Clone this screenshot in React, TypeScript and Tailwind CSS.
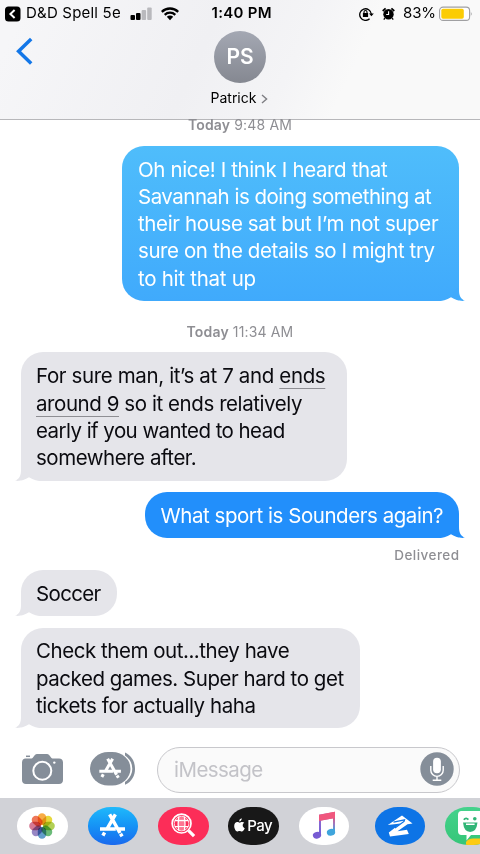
import React from 'react';

type Line = { text: React.ReactNode; track: string };

function Tail({ side, color }: { side: 'left' | 'right'; color: string }) {
  return (
    <svg
      className={side === 'right' ? 'absolute -right-[6px] -bottom-px' : 'absolute -left-[6px] -bottom-px -scale-x-100'}
      width="32"
      height="24"
      viewBox="0 0 32 24"
    >
      <path d="M24 10H26V12C26 17.5 27.5 20.8 32 22.8C27 23.4 22.5 22 18 19.2Z" fill={color} />
      <path d="M4 23.2C9.5 23 13.5 21.8 18 19.2C22.5 22 27 23.4 32 22.8V24H4Z" fill="#fff" />
    </svg>
  );
}

function Bubble({ side, box, fill, tail, lines }: { side: 'left' | 'right'; box: string; fill: string; tail: string; lines: Line[] }) {
  return (
    <div className={`relative flex flex-col justify-center rounded-[22px] pt-px text-[20.5px] leading-[27.25px] ${side === 'right' ? 'ml-auto mr-[21px] rounded-br-none pl-[16px] text-white' : 'ml-[20.5px] rounded-bl-none pl-[15.5px] text-[#0b0b10]'} ${box} ${fill}`}>
      <Tail side={side} color={tail} />
      {lines.map((l, i) => (
        <div key={i} className={`relative whitespace-nowrap ${l.track}`}>{l.text}</div>
      ))}
    </div>
  );
}

function StoreMark({ className }: { className: string }) {
  return (
    <svg className={className} viewBox="0 0 28 26" fill="none" stroke="#fff" strokeWidth="3.6" strokeLinecap="butt">
      <path d="M11 1.5L21.8 20.8M17 1.5L7.8 17.5M5.8 20.3L4 23.5M1 16.6H17.4M20.4 16.6H27M22.3 21.6L24 24.4" />
    </svg>
  );
}

function StatusBar() {
  return (
    <div className="flex h-[27px] items-center pl-[5px] pr-[7px] text-black">
      <div className="flex w-[206.5px] items-center">
        <svg width="16" height="16" viewBox="0 0 16 16">
          <rect x="0" y="0.5" width="15.5" height="15" rx="3.5" />
          <path d="M9.6 4L5.4 8L9.6 12" fill="none" stroke="#fff" strokeWidth="2" />
        </svg>
        <span className="ml-[5px] w-[95px] whitespace-nowrap text-[15px] tracking-[0.2px]">D&amp;D Spell 5e</span>
        <svg className="ml-[9px]" width="23" height="14" viewBox="0 0 23 14">
          <rect x="0.5" y="8" width="4.5" height="5" rx="1" />
          <rect x="6" y="6" width="4.5" height="7" rx="1" />
          <rect x="11.6" y="3" width="4.5" height="10" rx="1" fill="#b9b9bd" />
          <rect x="17.2" y="0.5" width="4.5" height="12.5" rx="1" fill="#b9b9bd" />
        </svg>
        <svg className="ml-[8px]" width="18" height="14" viewBox="0 0 18 14" fill="none" stroke="#000" strokeWidth="2.3">
          <path d="M0.8 4.8C5.4 0.4 12.6 0.4 17.2 4.8M3.7 7.8C6.7 5 11.3 5 14.3 7.8" />
          <path d="M5.8 9.8C7.6 8.2 10.4 8.2 12.2 9.8L9 13.2Z" fill="#000" stroke="none" />
        </svg>
      </div>
      <span className="w-[62px] whitespace-nowrap text-[15px] font-semibold tracking-[0.3px]">1:40 PM</span>
      <div className="ml-auto flex items-center">
        <svg width="15" height="14" viewBox="0 0 15 14" fill="none" stroke="#000" strokeWidth="1.3">
          <path d="M10.6 11.7A5.8 5.8 0 1 1 12.3 7" />
          <path d="M10 6.5H14.8L12.4 9.2Z" fill="#000" stroke="none" />
          <rect x="3.9" y="6" width="5.2" height="4" fill="#000" stroke="none" />
          <path d="M5 6V5A1.5 1.5 0 0 1 8 5V6" strokeWidth="1.1" />
        </svg>
        <svg className="ml-[8px]" width="13" height="14" viewBox="0 0 13 14">
          <circle cx="6.5" cy="7.3" r="5.2" />
          <path d="M0.7 4L3.6 1.4M12.3 4L9.4 1.4" stroke="#000" strokeWidth="1.7" />
          <path d="M2.8 11.2L1.8 12.6M10.2 11.2L11.2 12.6" stroke="#000" strokeWidth="1.3" />
          <path d="M6.6 4.2V7.5H4.2" fill="none" stroke="#fff" strokeWidth="1.1" />
        </svg>
        <span className="ml-[8px] w-[33px] whitespace-nowrap text-[15px] tracking-[-0.1px]">83%</span>
        <svg className="ml-[3px]" width="34" height="16" viewBox="0 0 34 16">
          <rect x="0.6" y="1.1" width="30" height="13.3" rx="3.5" fill="#fff" stroke="#a0a0a2" strokeWidth="1.1" />
          <rect x="2.3" y="2.8" width="22.5" height="10" rx="1.7" fill="#fbcc04" />
          <path d="M31.8 5.5Q33.6 7.7 31.8 10Z" fill="#a0a0a2" />
        </svg>
      </div>
    </div>
  );
}

function Stamp({ time, className }: { time: string; className: string }) {
  return (
    <div className={`text-center text-[14px] leading-4 tracking-[0.15px] text-[#8e8e93] ${className}`}>
      <span className="font-semibold">Today</span> {time}
    </div>
  );
}

const petals = [
  ['#f7a12b', 0], ['#e4d321', 45], ['#a8ca3d', 90], ['#57b266', 135],
  ['#4c91c3', 180], ['#8a78bd', 225], ['#cf6685', 270], ['#ed6542', 315],
] as const;

function AppIcon({ className, children }: { className: string; children: React.ReactNode }) {
  return (
    <div className={`flex h-[37.5px] w-[50.5px] shrink-0 items-center justify-center overflow-hidden rounded-[23px/18.75px] ${className}`}>
      {children}
    </div>
  );
}

export default function App() {
  return (
    <div className="flex h-[854px] w-[480px] flex-col overflow-hidden bg-white font-['Inter','Liberation_Sans',sans-serif]">
      <header className="h-[120px] shrink-0 border-b border-[#b7b7ba] bg-[linear-gradient(115deg,#f6f6f8_5%,#f0f0f3_42%,#f4f4f6_60%,#f9f9f9_72%)]">
        <StatusBar />
        <div className="grid grid-cols-[214px_52px_214px]">
          <svg className="ml-[15px] mt-[9px]" width="20" height="30" viewBox="0 0 20 30" fill="none" stroke="#1377e8" strokeWidth="3.5">
            <path d="M16.2 3L3.6 15.2L16.2 27.4" />
          </svg>
          <div className="mt-[4px] flex h-[52px] w-[52px] items-center justify-center rounded-full bg-linear-to-b from-[#a4a8b3] to-[#858891] text-[21px] font-semibold text-white">PS</div>
        </div>
        <div className="mt-[5px] flex items-center pl-[210.5px] text-[14px] leading-5 text-black">
          <span className="w-[47px] whitespace-nowrap">Patrick</span>
          <svg className="ml-[3.5px] mt-[1px]" width="7" height="10" viewBox="0 0 7 10" fill="none" stroke="#7e7e83" strokeWidth="1.4">
            <path d="M1 1L5.6 5L1 9" />
          </svg>
        </div>
      </header>

      <main className="h-[626px] shrink-0">
        <Stamp time="9:48 AM" className="-mt-[3px]" />
        <Bubble side="right" box="mt-[13px] h-[154.5px] w-[337px]" fill="bg-linear-to-b from-[#4fbdfb] to-[#40aafc]" tail="#40aafc" lines={[
          { text: 'Oh nice! I think I heard that', track: 'tracking-[-0.37px]' },
          { text: 'Savannah is doing something at', track: 'tracking-[-0.5px]' },
          { text: 'their house sat but I’m not super', track: 'tracking-[-0.37px]' },
          { text: 'sure on the details so I might try', track: 'tracking-[-0.41px]' },
          { text: 'to hit that up', track: 'tracking-[-0.27px]' },
        ]} />
        <Stamp time="11:34 AM" className="mt-[23.5px]" />
        <Bubble side="left" box="mt-[12px] h-[128.5px] w-[326.5px]" fill="bg-[#e5e5ea]" tail="#e5e5ea" lines={[
          { text: <>For sure man, it’s at 7 and <span className="underline decoration-[#8e8e93] decoration-1 underline-offset-[5px]">ends</span></>, track: 'tracking-[-0.37px]' },
          { text: <><span className="underline decoration-[#8e8e93] decoration-1 underline-offset-[5px]">around 9</span> so it ends relatively</>, track: 'tracking-[-0.43px]' },
          { text: 'early if you wanted to head', track: 'tracking-[-0.56px]' },
          { text: 'somewhere after.', track: 'tracking-[-0.47px]' },
        ]} />
        <Bubble side="right" box="mt-[11.5px] h-[46px] w-[314.5px] pt-[2px]" fill="bg-[#228ffb]" tail="#228ffb" lines={[
          { text: 'What sport is Sounders again?', track: 'tracking-[-0.45px]' },
        ]} />
        <div className="mt-[9px] pr-[20.5px] text-right text-[13.5px] font-medium leading-4 tracking-[0.45px] text-[#8e8e93]">Delivered</div>
        <Bubble side="left" box="mt-[7px] h-[46px] w-[96px]" fill="bg-[#e5e5ea]" tail="#e5e5ea" lines={[
          { text: 'Soccer', track: 'tracking-[-0.65px]' },
        ]} />
        <Bubble side="left" box="mt-[11.5px] h-[100.5px] w-[339.5px]" fill="bg-[#e5e5ea]" tail="#e5e5ea" lines={[
          { text: 'Check them out...they have', track: 'tracking-[-0.46px]' },
          { text: 'packed games. Super hard to get', track: 'tracking-[-0.46px]' },
          { text: 'tickets for actually haha', track: 'tracking-[-0.42px]' },
        ]} />
      </main>

      <div className="flex h-[52px] shrink-0 items-start">
        <svg className="ml-[21px] mt-[7px]" width="43" height="32" viewBox="0 0 43 32">
          <path d="M4.5 5.5H10.5C12.5 5.5 13 1 16 1H26C29 1 29.5 5.5 31.5 5.5H38C40.5 5.5 42 7 42 9.5V27C42 29.5 40.5 31 38 31H5C2.5 31 1 29.5 1 27V9.5C1 7 2.5 5.5 4.5 5.5Z" fill="#858e99" />
          <path d="M5 3.3H9" stroke="#858e99" strokeWidth="1.5" />
          <circle cx="21.3" cy="17.8" r="9" fill="none" stroke="#fff" strokeWidth="2" />
          <circle cx="33.3" cy="9.6" r="1.2" fill="#fff" />
        </svg>
        <svg className="ml-[26px] mt-[5px]" width="46" height="36" viewBox="0 0 46 36">
          <path d="M35 1.5C42 5 45 11 45 17.7C45 24.4 42 30.5 35 33.8Z" fill="#858e99" />
          <rect x="0" y="1" width="42.3" height="33.4" rx="18.5" ry="16.7" fill="#fff" />
          <rect x="0" y="1" width="40.5" height="33.4" rx="18.2" ry="16.7" fill="#858e99" />
          <g transform="translate(8.5 6.5) scale(0.83)" fill="none" stroke="#fff" strokeWidth="3.7">
            <path d="M11 1.5L21.8 20.8M17 1.5L7.8 17.5M5.8 20.3L4 23.5M1 16.6H17.4M20.4 16.6H27M22.3 21.6L24 24.4" />
          </g>
        </svg>
        <div className="ml-[21px] mt-[0.5px] flex h-[46px] w-[302.5px] items-center rounded-full border-[1.5px] border-[#c8c8cc] bg-[#fafafa] pl-[16px] pr-[5px]">
          <span className="pt-[2px] text-[20.5px] tracking-[-0.55px] text-[#c3c3c8]">iMessage</span>
          <svg className="ml-auto -mt-px" width="34" height="34" viewBox="0 0 34 34">
            <circle cx="17" cy="17" r="16.7" fill="#858e99" />
            <rect x="13.1" y="5.8" width="7.8" height="15.4" rx="3.9" fill="#fff" />
            <path d="M10.8 14V18.2A6.2 6.2 0 0 0 23.2 18.2V14M17 24.5V28M12.7 28.2H21.3" fill="none" stroke="#fff" strokeWidth="1.4" />
          </svg>
        </div>
      </div>

      <footer className="flex h-[56px] shrink-0 items-start bg-[#d1d2d7] pl-[17px] pt-[9px]">
        <AppIcon className="bg-white">
          <svg width="28" height="28" viewBox="0 0 28 28">
            {petals.map(([color, angle]) => (
              <rect key={angle} className="mix-blend-multiply" x="9.8" y="1.2" width="8.4" height="11.8" rx="4.2" fill={color} fillOpacity="0.88" transform={`rotate(${angle} 14 14)`} />
            ))}
          </svg>
        </AppIcon>
        <AppIcon className="ml-[20px] bg-linear-to-b from-[#20b9fb] to-[#1b69ee]"><StoreMark className="h-[25px] w-[27px]" /></AppIcon>
        <AppIcon className="ml-[20px] bg-[#fc2d58]">
          <svg width="25" height="25" viewBox="0 0 26 26" fill="none" stroke="#fff" strokeWidth="1.4">
            <circle cx="11" cy="11" r="9.8" strokeWidth="1.8" />
            <path d="M8.2 3.6H13.8V7H8.2ZM8.2 8.4H13.8V13.8H8.2ZM8.2 15H13.8V18.4H8.2Z" fill="#fff" fillOpacity="0.35" stroke="none" />
            <circle cx="11" cy="11" r="7.6" strokeWidth="0.8" />
            <path d="M8 3.8Q7 11 8 18.2M14 3.8Q15 11 14 18.2M4 7.8H18M4 14.2H18" />
            <path d="M18.3 18.3L24 24" strokeWidth="3.4" />
          </svg>
        </AppIcon>
        <AppIcon className="ml-[19.5px] bg-[#181818] text-white">
          <svg className="-mt-px" width="11" height="14" viewBox="0 0 22 27" fill="#fff">
            <path d="M15.5 0C15.7 3.5 13.2 6.2 10.5 6.3C10.2 3.3 12.7 .5 15.5 0ZM20.6 9.2C15.8 12 16.8 18.2 21.5 20C20 23.5 18 26.7 15.5 26.7C13.6 26.7 13.2 25.5 11 25.5C8.8 25.5 8.2 26.7 6.4 26.7C3.8 26.7 .4 20.8 .4 15.7C.4 10.4 3.5 7.5 6.6 7.5C8.6 7.5 10 8.8 11.4 8.8C12.8 8.8 14.2 7.4 16.6 7.4C18.2 7.4 19.7 8.1 20.6 9.2Z" />
          </svg>
          <span className="ml-[2px] text-[15px] font-medium tracking-[-0.5px]">Pay</span>
        </AppIcon>
        <AppIcon className="ml-[20px] bg-white">
          <svg width="24" height="29" viewBox="0 0 24 29">
            <defs>
              <linearGradient id="note" x1="0" y1="1" x2="1" y2="0"><stop offset="0" stopColor="#6b61da" /><stop offset=".5" stopColor="#a069c9" /><stop offset="1" stopColor="#f34d70" /></linearGradient>
              <linearGradient id="stem" x1="0" y1="0" x2="0" y2="1"><stop offset="0" stopColor="#f24d70" /><stop offset=".6" stopColor="#967bc5" /><stop offset="1" stopColor="#35a9df" /></linearGradient>
            </defs>
            <path d="M7 3.8L23 .8V7L9 9.6V23H7Z" fill="url(#note)" />
            <path d="M21 4H23V20H21Z" fill="url(#stem)" />
            <path d="M7 3.8L23 .8V7L7 10Z" fill="#f0577e" />
            <ellipse cx="5" cy="24.2" rx="4.2" ry="3.4" fill="#775bd3" transform="rotate(-15 5 24.2)" />
            <ellipse cx="19" cy="21.3" rx="4.2" ry="3.4" fill="#3fa5dc" transform="rotate(-15 19 21.3)" />
          </svg>
        </AppIcon>
        <div className="ml-[12.5px] mt-[3px] h-[32px] w-px bg-[#adaeb3]" />
        <AppIcon className="ml-[13px] bg-[#0d74e6]">
          <svg width="28" height="24" viewBox="0 0 28 24" fill="#fff">
            <path d="M1.8 11L16 1.5L26.5 9.6L21.5 10.3L11.5 17.2L21 15.8L22.8 20L4 22.6L2.8 18.6L14.5 9.4Z" />
            <path d="M7.5 8.2L18.5 5.8L18 7.4L9 14" fill="none" stroke="#0d74e6" strokeWidth="1.3" />
          </svg>
        </AppIcon>
        <AppIcon className="ml-[20px] bg-linear-to-b from-[#45d28c] to-[#35c678]">
          <svg className="-ml-px" width="42" height="38" viewBox="0 0 42 38">
            <path d="M17 38V35Q19 31.5 24 31.5H42V38Z" fill="#fdcb12" />
            <path d="M12.5 4H36V28H22L17.5 33.5V28H12.5Q9 28 9 24V8Q9 4 12.5 4Z" fill="#fff" />
            <path d="M14 15.6H28.5Q27.5 25 21.2 25T14 15.6Z" fill="#30b576" />
            <path d="M17 17.3H25.6" stroke="#fff" strokeWidth="1.6" />
            <path d="M14.8 12.8Q17 10 19.4 12.6" fill="none" stroke="#30b576" strokeWidth="1.8" />
            <circle cx="25.8" cy="11.8" r="1.8" fill="#30b576" />
          </svg>
        </AppIcon>
      </footer>
    </div>
  );
}
